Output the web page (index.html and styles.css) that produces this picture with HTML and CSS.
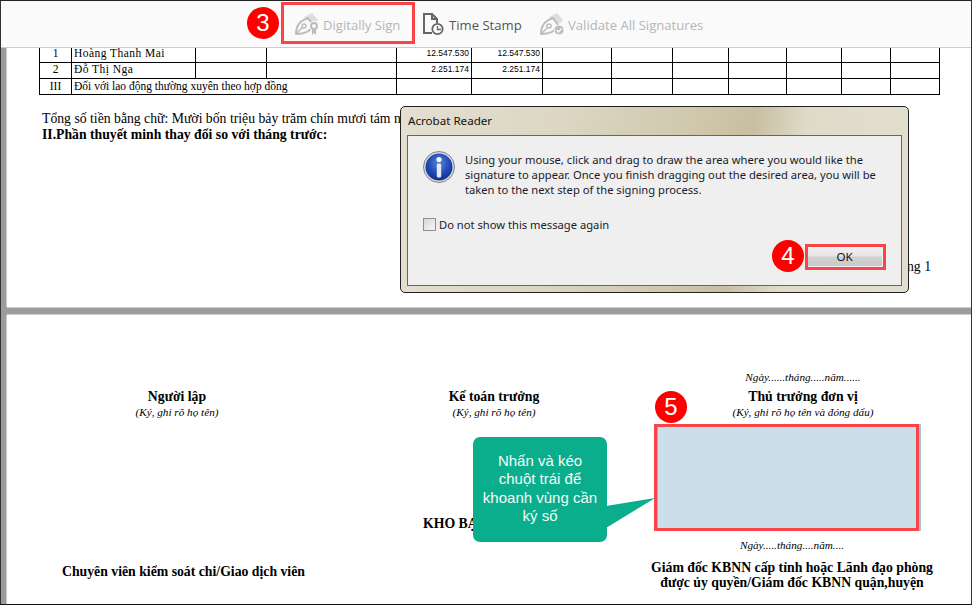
FILE: index.html
```html
<!DOCTYPE html>
<html lang="vi">
<head>
    <meta charset="UTF-8">
    <title>Digitally Sign</title>
    <link rel="stylesheet" href="styles.css">
</head>
<body>
    <div class="shot">
        <div class="toolbar">
            <div class="tool tool-sign off">
                <svg class="icon" width="26" height="24" viewBox="0 0 26 24">
                    <path d="M10 5 L18 1 L24 8 L20 12 Z" fill="#dedede"/>
                    <path d="M2 22 C2 14 5 9 14 6 L19 13 C17 19 10 22 2 22 Z" fill="none" stroke="#bcbcbc" stroke-width="2" stroke-linejoin="round"/>
                    <path d="M2 22 L9 15" stroke="#bcbcbc" stroke-width="1.5"/>
                    <circle cx="10" cy="14" r="2" fill="none" stroke="#bcbcbc" stroke-width="1.5"/>
                    <circle cx="20" cy="14" r="5" fill="#fafafa"/>
                    <path d="M18 16 V23 L20 21 L22 23 V16 Z" fill="#bcbcbc"/>
                    <circle cx="20" cy="14" r="3" fill="#fafafa" stroke="#bcbcbc" stroke-width="2"/>
                </svg>
                <span>Digitally Sign</span>
            </div>
            <div class="tool tool-stamp">
                <svg class="icon" width="22" height="24" viewBox="0 0 22 24">
                    <path d="M10 21 H2 V2 H10 L15 7 V11" fill="none" stroke="#666" stroke-width="2"/>
                    <path d="M10 2 V7 H15" fill="none" stroke="#666" stroke-width="2"/>
                    <circle cx="15.5" cy="17" r="5.2" fill="none" stroke="#666" stroke-width="1.8"/>
                    <path d="M15.5 14 V17.5 H19" fill="none" stroke="#666" stroke-width="1.3"/>
                </svg>
                <span>Time Stamp</span>
            </div>
            <div class="tool tool-validate off">
                <svg class="icon" width="26" height="24" viewBox="0 0 26 24">
                    <path d="M10 5 L18 1 L24 8 L20 12 Z" fill="#dedede"/>
                    <path d="M2 22 C2 14 5 9 14 6 L19 13 C17 19 10 22 2 22 Z" fill="none" stroke="#bcbcbc" stroke-width="2" stroke-linejoin="round"/>
                    <path d="M2 22 L9 15" stroke="#bcbcbc" stroke-width="1.5"/>
                    <circle cx="10" cy="14" r="2" fill="none" stroke="#bcbcbc" stroke-width="1.5"/>
                    <circle cx="20" cy="18" r="5" fill="#bcbcbc" stroke="#fafafa"/>
                    <path d="M17.5 18 L19.5 20 L22.5 16.5" fill="none" stroke="#fafafa" stroke-width="1.4"/>
                </svg>
                <span>Validate All Signatures</span>
            </div>
        </div>

        <div class="viewer">
            <div class="page page-one">
                <table class="sheet">
                    <colgroup>
                        <col><col><col><col><col><col><col><col><col><col><col><col><col>
                    </colgroup>
                    <tr class="person">
                        <td class="idx">1</td><td class="name">Hoàng Thanh Mai</td><td></td><td></td>
                        <td class="num">12.547.530</td><td class="num">12.547.530</td>
                        <td></td><td></td><td></td><td></td><td></td><td></td><td></td>
                    </tr>
                    <tr class="person">
                        <td class="idx">2</td><td class="name">Đỗ Thị Nga</td><td></td><td></td>
                        <td class="num">2.251.174</td><td class="num">2.251.174</td>
                        <td></td><td></td><td></td><td></td><td></td><td></td><td></td>
                    </tr>
                    <tr>
                        <td class="idx">III</td><td colspan="3">Đối với lao động thường xuyên theo hợp đồng</td>
                        <td></td><td></td>
                        <td></td><td></td><td></td><td></td><td></td><td></td><td></td>
                    </tr>
                </table>
                <p class="amount">Tổng số tiền bằng chữ: Mười bốn triệu bảy trăm chín mươi tám n</p>
                <p class="section">II.Phần thuyết minh thay đổi so với tháng trước:</p>
                <p class="page-no">Trang 1</p>
            </div>

            <div class="page page-two">
                <div class="sign-top">
                    <div class="sign-col">
                        <p class="who">Người lập</p>
                        <p class="hint">(Ký, ghi rõ họ tên)</p>
                    </div>
                    <div class="sign-col">
                        <p class="who">Kế toán trưởng</p>
                        <p class="hint">(Ký, ghi rõ họ tên)</p>
                    </div>
                    <div class="sign-col">
                        <p class="date">Ngày......tháng.....năm......</p>
                        <p class="who">Thủ trưởng đơn vị</p>
                        <p class="hint">(Ký, ghi rõ họ tên và đóng dấu)</p>
                    </div>
                </div>
                <div class="sign-bottom">
                    <p class="who staff">Chuyên viên kiểm soát chi/Giao dịch viên</p>
                    <p class="who treasury">KHO BẠC</p>
                    <div class="sign-col director">
                        <p class="date">Ngày.....tháng....năm....</p>
                        <p class="who">Giám đốc KBNN cấp tỉnh hoặc Lãnh đạo phòng<br>được ủy quyền/Giám đốc KBNN quận,huyện</p>
                    </div>
                </div>
            </div>
        </div>

        <div class="dialog">
            <div class="dialog-title">Acrobat Reader</div>
            <div class="dialog-body">
                <div class="dialog-msg">
                    <svg class="info" width="32" height="32" viewBox="0 0 32 32">
                        <defs>
                            <radialGradient id="infoBlue" cx="50%" cy="35%" r="65%">
                                <stop offset="0" stop-color="#5b86dd"/>
                                <stop offset="0.6" stop-color="#1f4cb4"/>
                                <stop offset="1" stop-color="#12308c"/>
                            </radialGradient>
                        </defs>
                        <circle cx="16" cy="16" r="15.5" fill="#d8dbe0" stroke="#7d8590"/>
                        <circle cx="16" cy="16" r="13.5" fill="url(#infoBlue)"/>
                        <circle cx="16" cy="8.5" r="2.6" fill="#f4f6fa"/>
                        <rect x="13.8" y="12.5" width="4.4" height="14" rx="1.6" fill="#e6e9ef"/>
                    </svg>
                    <p>Using your mouse, click and drag to draw the area where you would like the signature to appear. Once you finish dragging out the desired area, you will be taken to the next step of the signing process.</p>
                </div>
                <label class="dialog-check"><span class="box"></span>Do not show this message again</label>
                <div class="dialog-foot"><button class="ok">OK</button></div>
            </div>
        </div>

        <div class="mark mark-sign"></div>
        <div class="mark mark-ok"></div>
        <div class="mark mark-area"></div>
        <div class="badge badge-3">3</div>
        <div class="badge badge-4">4</div>
        <div class="badge badge-5">5</div>

        <svg class="tail" width="52" height="34" viewBox="0 0 52 34">
            <path d="M0 9 L49 1 L0 31 Z" fill="#0aae8d"/>
        </svg>
        <div class="callout">Nhấn và kéo chuột trái để khoanh vùng cần ký số</div>
    </div>
</body>
</html>
```

FILE: styles.css
```css
body {
    margin: 0;
    background: #fff;
}

p {
    margin: 0;
}

.shot {
    width: 972px;
    height: 605px;
    box-sizing: border-box;
    border-top: 1px solid #222;
    border-left: 1px solid #333;
    border-right: 1px solid #333;
    border-bottom: 1px solid #111;
    position: relative;
    overflow: hidden;
    display: flex;
    flex-direction: column;
    font-family: "Liberation Serif", serif;
    color: #000;
}

/* toolbar */
.toolbar {
    height: 47px;
    flex: none;
    box-sizing: border-box;
    display: flex;
    align-items: center;
    background: #fafafa;
    border-bottom: 1px solid #ccc;
    font-family: "Open Sans", sans-serif;
    font-size: 13.1px;
    color: #555;
    position: relative;
    z-index: 1;
}

.tool {
    display: flex;
    align-items: center;
    position: absolute;
    top: 11px;
    height: 24px;
}

.tool span {
    margin-top: 2px;
}

.tool-sign { left: 293px; gap: 3px; }
.tool-stamp { left: 421px; gap: 5px; }
.tool-validate { left: 538px; gap: 3px; }

.tool.off {
    color: #b6b6b6;
}

/* pdf pages */
.viewer {
    flex: 1;
    min-height: 0;
    display: flex;
    flex-direction: column;
    gap: 8px;
    background: #9c9c9c;
    border-left: 5px solid #9c9c9c;
}

.page {
    background: #fff;
    box-shadow: -1px 0 0 #ccc;
    margin-left: 1px;
    position: relative;
    overflow: hidden;
}

.page-one {
    height: 259px;
    flex: none;
    box-shadow: -1px 0 0 #ccc, 0 1px 0 #ccc;
    padding-left: 32px;
}

.page-two {
    flex: 1;
    box-shadow: -1px 0 0 #ccc, 0 -1px 0 #ccc;
    padding-top: 55px;
}

.sheet {
    border-collapse: collapse;
    table-layout: fixed;
    width: 901px;
    margin-top: -2px;
    font-size: 11.5px;
}

.sheet td {
    border: 1px solid #000;
    height: 14px;
    padding: 0 2px 1px;
    line-height: 13px;
    white-space: nowrap;
}

.sheet col:nth-child(1) { width: 32px; }
.sheet col:nth-child(2) { width: 124px; }
.sheet col:nth-child(3) { width: 71px; }
.sheet col:nth-child(4) { width: 130px; }
.sheet col:nth-child(5) { width: 75px; }
.sheet col:nth-child(6) { width: 71px; }
.sheet col:nth-child(7) { width: 69px; }
.sheet col:nth-child(8) { width: 61px; }
.sheet col:nth-child(9) { width: 56px; }
.sheet col:nth-child(10) { width: 58px; }
.sheet col:nth-child(11) { width: 55px; }
.sheet col:nth-child(12) { width: 49px; }
.sheet col:nth-child(13) { width: 49px; }

.sheet .idx {
    text-align: center;
}

.sheet .name,
.person .idx {
    height: 12px;
    line-height: 12px;
    padding-bottom: 3px;
}

.sheet .name {
    letter-spacing: 0.45px;
}

.sheet .num {
    height: 13px;
    padding-bottom: 2px;
    text-align: right;
    font-family: "Liberation Sans", sans-serif;
    font-size: 8.5px;
}

.amount {
    margin: 16px 0 0 3px;
    font-size: 13.72px;
    line-height: 16px;
    white-space: nowrap;
}

.section {
    margin-left: 3px;
    font-size: 13.72px;
    font-weight: bold;
    line-height: 16px;
}

.page-no {
    margin: 116px 40px 0 0;
    text-align: right;
    font-size: 13.72px;
    line-height: 16px;
}

.sign-top {
    display: grid;
    grid-template-columns: 340px 294px 324px;
    align-items: end;
}

.sign-col {
    text-align: center;
}

.who {
    font-size: 13.75px;
    font-weight: bold;
    line-height: 15px;
}

.hint {
    font-size: 11.2px;
    font-style: italic;
    line-height: 15px;
    margin-top: 1px;
}

.date {
    font-size: 11.2px;
    font-style: italic;
    line-height: 15px;
    margin-bottom: 4px;
}

.sign-bottom {
    margin-top: 96px;
    display: grid;
    grid-template-columns: 416px 216px 306px;
    align-items: end;
}

.staff {
    padding-left: 55px;
    white-space: nowrap;
    margin-bottom: 11px;
}

.treasury {
    align-self: start;
    white-space: nowrap;
}

.director {
    margin-top: 22px;
    white-space: nowrap;
}

.director .date {
    margin-bottom: 7px;
}

/* acrobat dialog */
.dialog {
    position: absolute;
    left: 399px;
    top: 105px;
    width: 509px;
    height: 187px;
    box-sizing: border-box;
    border: 1px solid #222;
    border-radius: 5px;
    padding: 0 6px 6px;
    display: flex;
    flex-direction: column;
    background: linear-gradient(100deg, #e4dfd0 0%, #dcd6c3 30%, #d2caaf 52%, #c8bfa2 66%, #e0dbc9 76%, #e2decf 100%);
    z-index: 2;
}

.dialog-title {
    height: 28px;
    flex: none;
    padding: 6px 0 0 1px;
    box-sizing: border-box;
    font-family: "Noto Sans", sans-serif;
    font-size: 11.6px;
    line-height: 16px;
    color: #111;
}

.dialog-body {
    flex: 1;
    box-sizing: border-box;
    background: #efefef;
    border: 1px solid #666;
    font-family: "Noto Sans", sans-serif;
    font-size: 11.2px;
    color: #1a1a2a;
    padding: 15px 15px 0;
    display: flex;
    flex-direction: column;
}

.dialog-msg {
    display: flex;
    gap: 10px;
    align-items: flex-start;
}

.dialog-msg p {
    width: 420px;
    line-height: 15px;
    margin-top: 1px;
}

.info {
    flex: none;
}

.dialog-check {
    display: flex;
    align-items: center;
    gap: 3px;
    margin-top: 20px;
    line-height: 15px;
}

.box {
    width: 11px;
    height: 11px;
    border: 1px solid #8e8e8e;
    background: linear-gradient(135deg, #d8d8d8, #f5f5f5);
}

.dialog-foot {
    display: flex;
    justify-content: flex-end;
    margin: 15px 4px 0 0;
}

.ok {
    width: 75px;
    height: 19px;
    padding: 0;
    border: 0;
    font-family: "Noto Sans", sans-serif;
    font-size: 11.6px;
    color: #111;
    background: linear-gradient(to bottom, #f0f0f0 0%, #e6e6e6 45%, #d0d0d0 55%, #cbcbcb 100%);
}

/* annotations on top of the screenshot */
.mark {
    position: absolute;
    box-sizing: border-box;
    border: 3px solid #fb4449;
    z-index: 3;
}

.mark-sign {
    left: 280px;
    top: 1px;
    width: 134px;
    height: 42px;
}

.mark-ok {
    left: 804px;
    top: 243px;
    width: 81px;
    height: 26px;
}

.mark-area {
    left: 653px;
    top: 423px;
    width: 265px;
    height: 107px;
    background: #cbdfea;
    box-shadow: inset 1px 0 0 #8fb4d6, 2px 0 0 #a9c1d6;
}

.badge {
    position: absolute;
    width: 32px;
    height: 32px;
    border-radius: 50%;
    background: #fe0000;
    color: #fff;
    font-family: "Liberation Sans", sans-serif;
    font-size: 24px;
    line-height: 32px;
    text-align: center;
    z-index: 4;
}

.badge-3 { left: 246px; top: 6px; }
.badge-4 { left: 771px; top: 239px; }
.badge-5 { left: 654px; top: 390px; }

.callout {
    position: absolute;
    left: 472px;
    top: 436px;
    width: 134px;
    height: 105px;
    box-sizing: border-box;
    padding: 15px 8px 0;
    border-radius: 7px;
    background: #0aae8d;
    color: #f2fbf8;
    font-family: "Liberation Sans", sans-serif;
    font-size: 15px;
    line-height: 18.4px;
    text-align: center;
    z-index: 3;
}

.tail {
    position: absolute;
    left: 605px;
    top: 496px;
    z-index: 3;
}
```
